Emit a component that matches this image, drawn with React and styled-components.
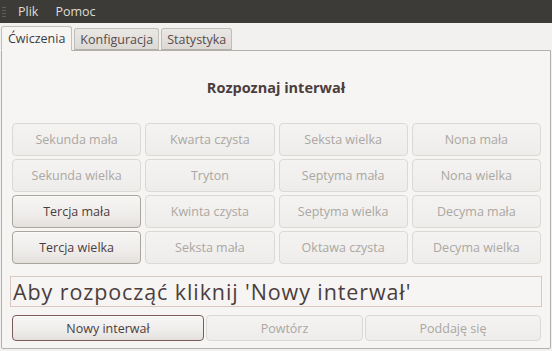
import React from "react";
import styled, { createGlobalStyle } from "styled-components";

const Global = createGlobalStyle`
  html, body { margin: 0; padding: 0; }
  body {
    width: 552px;
    height: 351px;
    overflow: hidden;
    background: #f2f1f0;
    font-family: "Open Sans", "DejaVu Sans", sans-serif;
    color: #4c3d3d;
  }
`;

const Window = styled.div`
  width: 552px;
  height: 351px;
  display: flex;
  flex-direction: column;
  background: #f2f1f0;
`;

const MenuBar = styled.div`
  height: 23px;
  background: #3c3b37;
  display: flex;
  align-items: center;
  padding-left: 2px;
  gap: 17px;
`;

const Grip = styled.div`
  width: 4px;
  height: 10px;
  margin-right: -5px;
  background: repeating-linear-gradient(to bottom, #5e5c57 0 1px, transparent 1px 3px);
`;

const MenuItem = styled.span`
  font-size: 12.5px;
  color: #dfdbd2;
`;

const TabRow = styled.div`
  display: flex;
  align-items: flex-end;
  padding: 2px 0 0 1px;
  gap: 2px;
  height: 25px;
  position: relative;
  z-index: 1;
`;

const Tab = styled.div`
  height: ${(p) => (p.$active ? "25px" : "22px")};
  box-sizing: border-box;
  padding: 0 ${(p) => (p.$active ? "6px" : "5px")};
  display: flex;
  align-items: center;
  font-size: 12.5px;
  border: 1px solid #c1bdb7;
  border-bottom: ${(p) => (p.$active ? "1px solid #f6f5f4" : "1px solid #b3b0ab")};
  border-radius: 3px 3px 0 0;
  margin-bottom: ${(p) => (p.$active ? "-1px" : "0")};
  background: ${(p) =>
    p.$active ? "#f6f5f4" : "linear-gradient(to bottom, #eae8e5, #dcd9d5)"};
  color: ${(p) => (p.$active ? "#3c3c3c" : "#5a4a4a")};
`;

const Panel = styled.div`
  flex: 1;
  margin: 0 1px 2px 1px;
  border: 1px solid #b3b0ab;
  border-radius: 0 0 2px 2px;
  background: #f6f5f4;
  display: flex;
  flex-direction: column;
  padding: 0 8px 0 8px;
`;

const Title = styled.div`
  height: 72px;
  display: flex;
  align-items: center;
  justify-content: center;
  font-weight: bold;
  font-size: 14.5px;
  color: #4c3d3d;
`;

const Grid = styled.div`
  display: grid;
  grid-template-columns: repeat(4, 1fr);
  grid-auto-rows: 33px;
  gap: 3px 4px;
  padding: 0 1px 0 2px;
`;

const Button = styled.div`
  box-sizing: border-box;
  display: flex;
  align-items: center;
  justify-content: center;
  font-size: 12.5px;
  border-radius: 4px;
  border: 1px solid ${(p) => (p.$focus ? "#7a5a5a" : p.$enabled ? "#aaa49e" : "#dcd9d5")};
  background: ${(p) =>
    p.$enabled
      ? "linear-gradient(to bottom, #f7f6f5 0%, #efedeb 60%, #e3e0dc 100%)"
      : "linear-gradient(to bottom, #f4f3f2, #eeedeb)"};
  color: ${(p) => (p.$enabled ? "#4c3d3d" : "#aba7a2")};
  box-shadow: ${(p) => (p.$enabled ? "inset 0 1px 0 #fbfbfa" : "none")};
`;

const Display = styled.div`
  margin: 12px 0 0 0;
  height: 31px;
  box-sizing: border-box;
  border: 1px solid #d8c8c0;
  background: #f6f5f4;
  display: flex;
  align-items: center;
  padding-left: 2px;
  font-size: 21.5px;
  letter-spacing: 0.9px;
  color: #4c3d3d;
`;

const Actions = styled.div`
  display: grid;
  grid-template-columns: 192px 157px 1fr;
  gap: 2px;
  margin-top: 8px;
  padding: 0 1px 0 2px;
`;

const ActionButton = styled(Button)`
  height: 26px;
`;

const rows = [
  ["Sekunda mała", "Kwarta czysta", "Seksta wielka", "Nona mała"],
  ["Sekunda wielka", "Tryton", "Septyma mała", "Nona wielka"],
  ["Tercja mała", "Kwinta czysta", "Septyma wielka", "Decyma mała"],
  ["Tercja wielka", "Seksta mała", "Oktawa czysta", "Decyma wielka"],
];
const enabled = new Set(["Tercja mała", "Tercja wielka"]);

export default function App() {
  return (
    <Window>
      <Global />
      <MenuBar>
        <Grip />
        <MenuItem>Plik</MenuItem>
        <MenuItem>Pomoc</MenuItem>
      </MenuBar>
      <TabRow>
        <Tab $active>Ćwiczenia</Tab>
        <Tab>Konfiguracja</Tab>
        <Tab>Statystyka</Tab>
      </TabRow>
      <Panel>
        <Title>Rozpoznaj interwał</Title>
        <Grid>
          {rows.flat().map((name) => (
            <Button key={name} $enabled={enabled.has(name)}>
              {name}
            </Button>
          ))}
        </Grid>
        <Display>Aby rozpocząć kliknij 'Nowy interwał'</Display>
        <Actions>
          <ActionButton $enabled $focus>
            Nowy interwał
          </ActionButton>
          <ActionButton>Powtórz</ActionButton>
          <ActionButton>Poddaję się</ActionButton>
        </Actions>
      </Panel>
    </Window>
  );
}
